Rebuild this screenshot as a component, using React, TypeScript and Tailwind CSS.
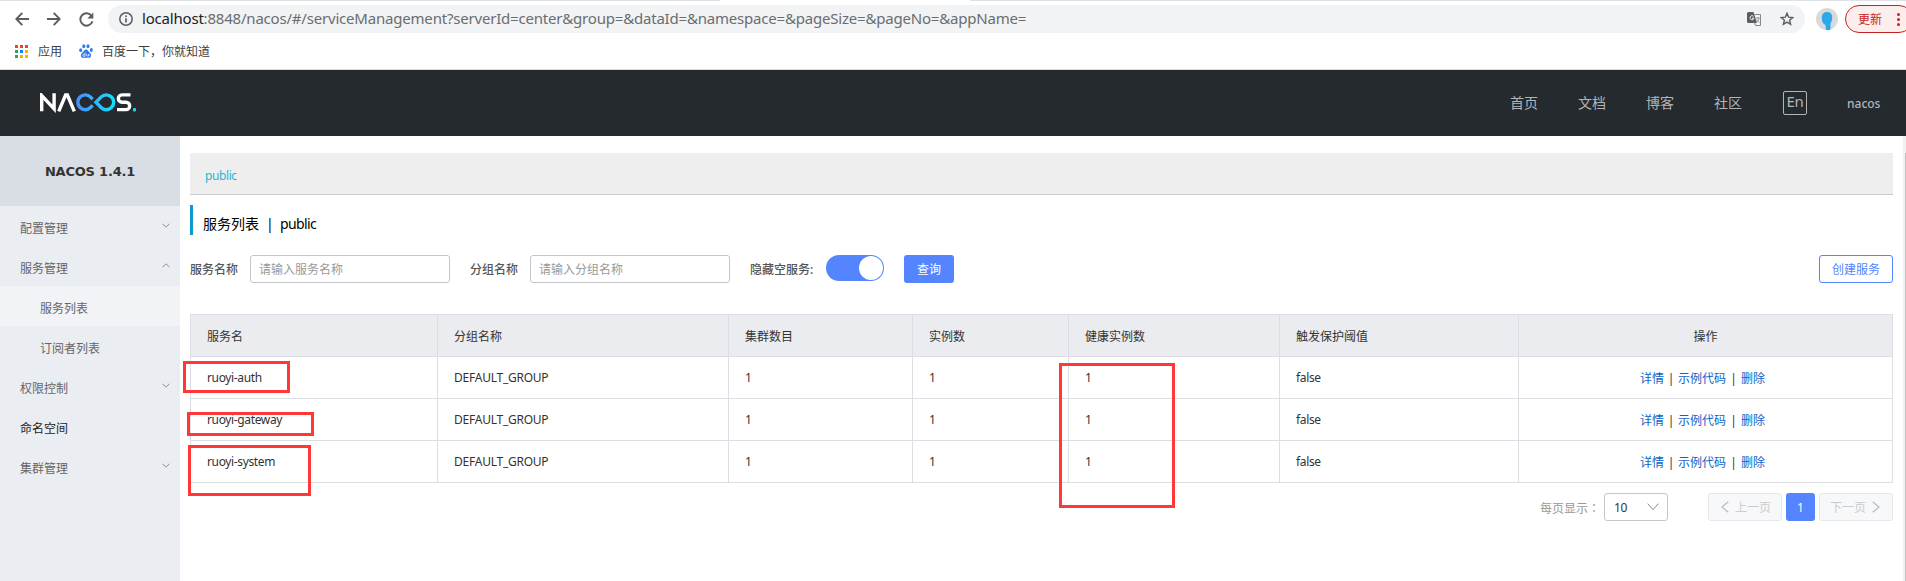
import React from 'react';

const F = "font-['Noto_Sans','Noto_Sans_CJK_SC',sans-serif]";

function Chevron({ up, className }: { up?: boolean; className?: string }) {
  return (
    <svg width="8" height="5" viewBox="0 0 8 5" fill="none" stroke="#8c8f94" strokeWidth="1" className={className}>
      <path d={up ? 'M0.5 4.3 4 0.8 7.5 4.3' : 'M0.5 0.7 4 4.2 7.5 0.7'} />
    </svg>
  );
}

function AppsGrid() {
  const c = ['#ea4335', '#ea4335', '#ea4335', '#34a05a', '#1a83f0', '#f5b400', '#34a05a', '#f5b400', '#f5b400'];
  return (
    <div className="grid grid-cols-3 gap-[2px]">
      {c.map((color, i) => (
        <span key={i} className="h-[3px] w-[3px]" style={{ background: color }} />
      ))}
    </div>
  );
}

function Toolbar() {
  return (
    <div className="flex h-[33px] items-start">
      <div className="mt-[5px] flex h-[28px] w-[108px] shrink-0 items-center pl-[15px]">
        <svg width="14" height="14" viewBox="0 0 14 14" fill="none" stroke="#5a5d61" strokeWidth="1.9">
          <path d="M14 7H1.5M7.3 0.9 1.3 7l6 6.1" />
        </svg>
        <svg width="14" height="14" viewBox="0 0 14 14" fill="none" stroke="#5a5d61" strokeWidth="1.9" className="ml-[18px]">
          <path d="M0 7h12.500M6.700 0.900 12.700 7l-6 6.100" />
        </svg>
        <svg width="15" height="15" viewBox="0 0 15 15" fill="none" className="ml-[18px]">
          <path d="M12.700 4A6.200 6.200 0 1 0 13.500 9.200" stroke="#5a5d61" strokeWidth="1.9" />
          <path d="M14.300 0.500v6h-6z" fill="#5a5d61" />
        </svg>
      </div>
      <div className="mt-[5px] flex h-[28px] w-[1697px] shrink-0 items-center rounded-full bg-[#f1f3f4] pl-[11px] pr-[11px]">
        <svg width="14" height="14" viewBox="0 0 14 14" fill="none" stroke="#5a5d61">
          <circle cx="7" cy="7" r="6.200" strokeWidth="1.500" />
          <path d="M7 6.200v4.300M7 3.500v1.500" strokeWidth="1.700" />
        </svg>
        <div className="ml-[9px] grow whitespace-pre pb-[2px] text-[15px] leading-[26px] tracking-[-0.198px] text-[#6a6d71]">
          <span className="text-[#202124]">localhost</span>:8848/nacos/#/serviceManagement?serverId=center&amp;group=&amp;dataId=&amp;namespace=&amp;pageSize=&amp;pageNo=&amp;appName=
        </div>
        <svg width="15" height="14" viewBox="0 0 15 14" fill="none">
          <path d="M1.500 0h5l3.500 11H1.500A1.500 1.500 0 0 1 0 9.500v-8A1.500 1.500 0 0 1 1.500 0z" fill="#5a5d61" />
          <path d="M7.500 2.500H13.500V13.500H8.500L7.500 10.500" stroke="#85888c" />
          <path d="M6.500 4.300A2 2 0 1 0 7 6.200H5" stroke="#f1f3f4" />
          <path d="M8.800 6h4M10.800 5v1M12 6c-.4 2-1.500 3.500-3 4.500M9.800 7.500l2.700 3" stroke="#85888c" strokeWidth=".8" />
        </svg>
        <svg width="14" height="14" viewBox="0 0 14 14" fill="none" stroke="#5a5d61" strokeWidth="1.400" className="ml-[18px]">
          <path d="M7 1.300 8.600 5.200l4.200.3-3.200 2.700 1 4.100L7 10.100l-3.600 2.200 1-4.100L1.200 5.500l4.200-.3z" />
        </svg>
      </div>
      <svg width="22" height="22" viewBox="0 0 22 22" className="ml-[11px] mt-[8px] shrink-0">
        <circle cx="11" cy="11" r="11" fill="#dadada" />
        <path d="M11 4c3.500 0 5.500 2 5.200 6-.2 3-1.200 4.500-1.700 5.500v5.900A11 11 0 0 1 10 22L9.500 17c-2.500-1-3.700-3.500-3.700-7C5.800 6.500 7.500 4 11 4z" fill="#2ba9ea" />
      </svg>
      <div className="ml-[7px] mt-[5px] flex h-[28px] w-[61px] items-center overflow-hidden">
        <div className="flex h-[28px] w-[68px] shrink-0 items-center rounded-full border border-[#c5221f] bg-[#fceeed] pl-[12px]">
          <span className="pt-[1px] text-[12px] text-[#c5221f]">更新</span>
          <span className="ml-[15px] flex flex-col gap-[2px]">
            <i className="h-[3px] w-[3px] rounded-full bg-[#c5221f]" />
            <i className="h-[3px] w-[3px] rounded-full bg-[#c5221f]" />
            <i className="h-[3px] w-[3px] rounded-full bg-[#c5221f]" />
          </span>
        </div>
      </div>
    </div>
  );
}

function Bookmarks() {
  return (
    <div className="flex h-[37px] items-center border-b border-[#d9dbdf] pl-[15px] text-[12px] leading-[18px] text-[#3c4043]">
      <AppsGrid />
      <span className="ml-[10px] pt-[2px]">应用</span>
      <svg width="14" height="14" viewBox="0 0 14 14" fill="#2f7bf0" className="ml-[17px]">
        <ellipse cx="1.700" cy="6.200" rx="1.500" ry="1.900" />
        <ellipse cx="4.800" cy="2.200" rx="1.500" ry="2" />
        <ellipse cx="9" cy="2.200" rx="1.500" ry="2" />
        <ellipse cx="12.300" cy="6" rx="1.500" ry="1.900" />
        <path d="M7 5.600c1.600 0 2.100 1.500 3.200 2.600 1.200 1.100 2.100 2 1.900 3.500-.2 1.700-1.500 2.200-2.900 2.100-1.600-.1-2.800-.1-4.400 0-1.400.1-2.700-.4-2.900-2.100-.2-1.500.8-2.400 1.900-3.500C4.900 7.100 5.400 5.600 7 5.600z" />
        <path d="M6 8.600v3.700H4.700c-1.300 0-1.300-2 0-2H6M7.600 10v1.500c0 .8 2.200.8 2.200 0V10v2.300" fill="none" stroke="#fff" strokeWidth=".7" />
      </svg>
      <span className="ml-[9px] pt-[2px]">百度一下，你就知道</span>
    </div>
  );
}

function Logo() {
  return (
    <svg width="98" height="20" viewBox="0 0 98 20" fill="none" strokeWidth="3.400">
      <defs>
        <linearGradient id="g" x1="36" y1="0" x2="76" y2="0" gradientUnits="userSpaceOnUse">
          <stop offset="0" stopColor="#4a8cff" />
          <stop offset="1" stopColor="#16e0f8" />
        </linearGradient>
      </defs>
      <path d="M1.700 18.300V2.500L14.100 15.800V0.300" stroke="#fff" />
      <path d="M18.700 18.300 25.600 2H27.400L34.300 18.300" stroke="#fff" />
      <path d="M52.600 6.300 50.600 4.200A7.400 7.400 0 1 0 50.600 14.400L52.600 12.300" stroke="url(#g)" />
      <path d="M56 9.300 61 4.100A7.400 7.400 0 1 1 61 14.500z" stroke="url(#g)" />
      <path d="M90.500 1.900H82a3.500 3.500 0 0 0 0 7.300H86a3.700 3.700 0 0 1 0 7.400H77" stroke="#fff" />
      <rect x="93" y="15" width="3" height="3.500" rx="1" fill="#16d9f0" />
    </svg>
  );
}

function Header() {
  return (
    <div className="flex h-[66px] items-center bg-[#252a2f] pl-[40px] text-[14px] text-[#b3b5b8]">
      <Logo />
      <div className="ml-auto flex items-center">
        <span className="w-[68px] pb-[2px]">首页</span>
        <span className="w-[68px] pb-[2px]">文档</span>
        <span className="w-[68px] pb-[2px]">博客</span>
        <span className="w-[69px] pb-[2px]">社区</span>
        <span className="flex h-[24px] w-[24px] items-center justify-center rounded-[2px] border border-[#b3b5b8] pb-[3px] text-[15px] leading-[19px] tracking-[-0.3px]">En</span>
        <span className="ml-[40px] w-[59px] pt-[1px] text-[12px] font-medium">nacos</span>
      </div>
    </div>
  );
}

const menu: { label: string; sub?: boolean; active?: boolean; dark?: boolean; arrow?: 'up' | 'down' }[] = [
  { label: '配置管理', arrow: 'down' },
  { label: '服务管理', arrow: 'up' },
  { label: '服务列表', sub: true, active: true },
  { label: '订阅者列表', sub: true },
  { label: '权限控制', arrow: 'down' },
  { label: '命名空间', dark: true },
  { label: '集群管理', arrow: 'down' },
];

function Sidebar() {
  return (
    <div className="w-[180px] shrink-0 bg-[#eaedf1]">
      <div className="flex h-[70px] items-center justify-center bg-[#d9dde4] pt-[2px] font-['DejaVu_Sans',sans-serif] text-[13px] font-bold tracking-[-0.2px] text-[#333]">
        NACOS 1.4.1
      </div>
      {menu.map((m) => (
        <div
          key={m.label}
          className={`flex h-[40px] items-center justify-between pr-[10px] pt-[4px] text-[12px] ${m.sub ? 'pl-[40px]' : 'pl-[20px]'} ${m.active ? 'bg-[#f1f3f7]' : ''} ${m.dark ? 'text-[#222]' : 'text-[#666]'}`}
        >
          <span className="pt-[2px]">{m.label}</span>
          {m.arrow && <Chevron up={m.arrow === 'up'} className="mb-[6px]" />}
        </div>
      ))}
    </div>
  );
}

const rows = ['ruoyi-auth', 'ruoyi-gateway', 'ruoyi-system'];
const COLS = 'grid grid-cols-[247px_291px_184px_156px_211px_239px_374px]';
const CELL = 'flex items-center border-r border-b border-[#dcdee3] pl-[16px]';

function Table() {
  return (
    <div className="mt-[31px] w-[1703px] border-t border-l border-[#dcdee3] text-[12px] text-[#333]">
      <div className={`${COLS} h-[42px] bg-[#ebecf0]`}>
        {['服务名', '分组名称', '集群数目', '实例数', '健康实例数', '触发保护阈值'].map((h) => (
          <div key={h} className={`${CELL} pt-[2px]`}>{h}</div>
        ))}
        <div className="flex items-center justify-center border-r border-b border-[#dcdee3] pt-[2px]">操作</div>
      </div>
      {rows.map((r) => (
        <div key={r} className={`${COLS} h-[42px]`}>
          {[r, 'DEFAULT_GROUP', '1', '1', '1', 'false'].map((v, i) => (
            <div key={i} className={`${CELL} ${i === 1 ? 'tracking-[-0.24px]' : 'tracking-[-0.36px]'}`}>{v}</div>
          ))}
          <div className="flex items-center justify-center border-r border-b border-[#dcdee3] pr-[6px] pt-[2px]">
            <a className="text-[#0a63c9]">详情</a>
            <span className="w-[14px] text-center">|</span>
            <a className="text-[#0a63c9]">示例代码</a>
            <span className="w-[15px] text-center">|</span>
            <a className="text-[#0a63c9]">删除</a>
          </div>
        </div>
      ))}
    </div>
  );
}

function Filters() {
  return (
    <div className="mt-[20px] flex h-[28px] items-center text-[12px]">
      <span className="w-[60px] pt-[2px] font-medium text-[#555]">服务名称</span>
      <div className="flex h-[28px] w-[200px] items-center rounded-[3px] border border-[#c4c6cf] pl-[8px] pt-[2px] text-[#999]">请输入服务名称</div>
      <span className="ml-[20px] w-[60px] pt-[2px] font-medium text-[#555]">分组名称</span>
      <div className="flex h-[28px] w-[200px] items-center rounded-[3px] border border-[#c4c6cf] pl-[8px] pt-[2px] text-[#999]">请输入分组名称</div>
      <span className="ml-[20px] w-[76px] pt-[2px] font-medium text-[#555]">隐藏空服务:</span>
      <div className="mb-[2px] flex h-[26px] w-[58px] items-center justify-end rounded-full bg-[#5584ff] p-[1px]">
        <i className="h-[24px] w-[24px] rounded-full bg-white" />
      </div>
      <div className="ml-[20px] flex h-[28px] w-[50px] items-center justify-center rounded-[3px] bg-[#5584ff] pt-[2px] text-white">查询</div>
      <div className="ml-auto flex h-[28px] w-[74px] items-center justify-center rounded-[3px] border border-[#5584ff] pt-[2px] text-[#5584ff]">创建服务</div>
    </div>
  );
}

function Pagination() {
  const btn = 'flex h-[28px] w-[74px] items-center justify-center gap-[6px] rounded-[3px] border border-[#e6e7eb] bg-[#f7f8fa] text-[#ccc]';
  return (
    <div className="mt-[10px] flex h-[28px] items-center justify-end text-[12px]">
      <span className="w-[64px] pt-[2px] text-[#999]">
        每页显示<span className="font-['Noto_Sans_CJK_TC',sans-serif]" lang="zh-TW">：</span>
      </span>
      <div className="flex h-[28px] w-[64px] items-center justify-between rounded-[3px] border border-[#c4c6cf] pl-[9px] pr-[8px] text-[#333]">
        <span className="pt-[2px] tracking-[-0.3px]">10</span>
        <svg width="12" height="8" viewBox="0 0 12 8" fill="none" stroke="#888"><path d="M.7.7 6 6.700 11.300.7" /></svg>
      </div>
      <div className={`${btn} ml-[40px] pl-[2px]`}>
        <svg width="8" height="12" viewBox="0 0 8 12" fill="none" stroke="#bbb" strokeWidth="1.200"><path d="M7.300.7 1 6l6.300 5.300" /></svg>
        <span className="pt-[2px]">上一页</span>
      </div>
      <div className="mx-[4px] flex h-[28px] w-[29px] items-center justify-center rounded-[3px] bg-[#5584ff] pt-[1px] text-white">1</div>
      <div className={`${btn} pr-[2px]`}>
        <span className="pt-[2px]">下一页</span>
        <svg width="8" height="12" viewBox="0 0 8 12" fill="none" stroke="#bbb" strokeWidth="1.200"><path d="M.7.7 7 6 .7 11.300" /></svg>
      </div>
    </div>
  );
}

export default function App() {
  return (
    <div className={`relative flex h-[581px] w-[1906px] flex-col overflow-hidden bg-white ${F}`}>
      <Toolbar />
      <Bookmarks />
      <Header />
      <div className="flex grow">
        <Sidebar />
        <div className="ml-[10px] w-[1703px] pt-[17px]">
          <div className="flex h-[42px] items-center border-b border-[#ccc] bg-[#eee] pl-[15px] pt-[5px] text-[12px] tracking-[-0.4px] text-[#1fb5d8]">public</div>
          <div className="mt-[10px] flex h-[30px] items-center border-l-[3px] border-[#0a9ad0] pl-[10px] pt-[6px] text-[14px] text-black">
            <span className="w-[63px]">服务列表</span>
            <span className="w-[14px]">|</span>
            <span className="tracking-[-0.6px]">public</span>
          </div>
          <Filters />
          <Table />
          <Pagination />
        </div>
        <div className="ml-auto flex w-[3px] justify-end bg-[#f1f1f1] pt-[17px]">
          <div className="w-px bg-[#c1c1c1]" />
        </div>
      </div>
      <div className="absolute left-0 top-0 h-px w-[720px] bg-[#dee1e6]" />
      <div className="absolute left-[970px] top-0 h-px w-[936px] bg-[#dee1e6]" />
      <div className="absolute left-[183px] top-[361px] h-[32px] w-[107px] border-[3px] border-[#ff3737]" />
      <div className="absolute left-[187px] top-[412px] h-[24px] w-[127px] border-[3px] border-[#ff3737]" />
      <div className="absolute left-[188px] top-[445px] h-[51px] w-[123px] border-[3px] border-[#ff3737]" />
      <div className="absolute left-[1059px] top-[363px] h-[145px] w-[116px] border-[3px] border-[#ff3737]" />
    </div>
  );
}
